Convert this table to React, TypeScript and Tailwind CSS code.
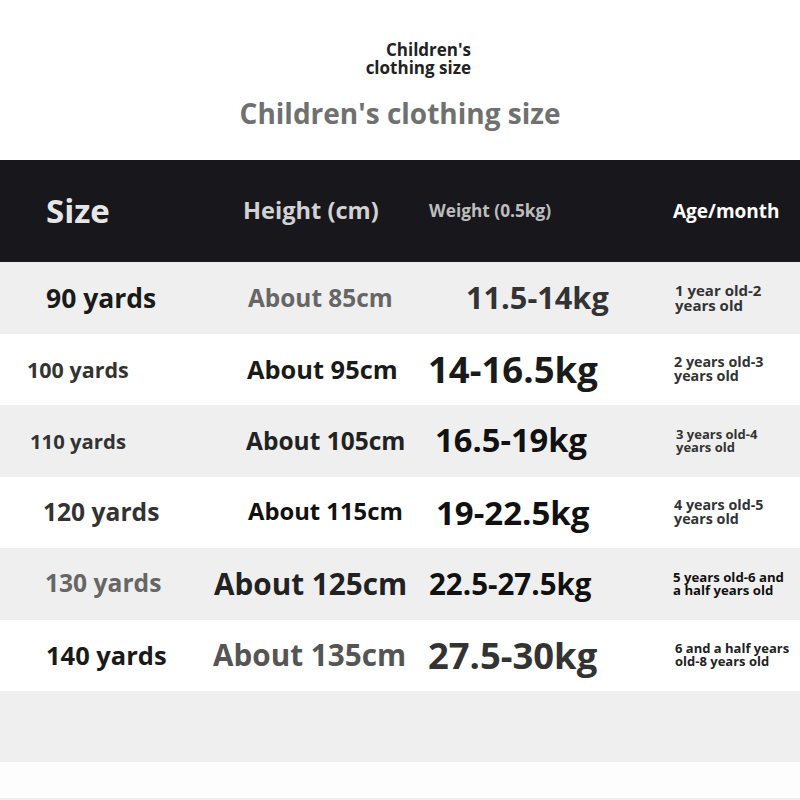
import React from "react";

type Cell = { text: string[]; pl: string; cls: string };
type Row = { bg: string; cells: Cell[] };

const rows: Row[] = [
  {
    bg: "bg-[#efefef]",
    cells: [
      { text: ["90 yards"], pl: "pl-[46px]", cls: "text-[26.5px] text-[#1a1a1a]" },
      { text: ["About 85cm"], pl: "pl-[48px]", cls: "text-[24.4px] text-[#666666]" },
      { text: ["11.5-14kg"], pl: "pl-[46px]", cls: "text-[30.7px] text-[#333333]" },
      { text: ["1 year old-2", "years old"], pl: "pl-[10px]", cls: "text-[15px] text-[#333333]" },
    ],
  },
  {
    bg: "bg-white",
    cells: [
      { text: ["100 yards"], pl: "pl-[27px]", cls: "text-[21.5px] text-[#333333]" },
      { text: ["About 95cm"], pl: "pl-[47px]", cls: "text-[25.4px] text-[#1a1a1a]" },
      { text: ["14-16.5kg"], pl: "pl-[8px]", cls: "text-[36.5px] text-[#1a1a1a]" },
      { text: ["2 years old-3", "years old"], pl: "pl-[9px]", cls: "text-[14.3px] text-[#333333]" },
    ],
  },
  {
    bg: "bg-[#efefef]",
    cells: [
      { text: ["110 yards"], pl: "pl-[30px]", cls: "text-[20.3px] text-[#333333]" },
      { text: ["About 105cm"], pl: "pl-[46px]", cls: "text-[24.5px] text-[#222222]" },
      { text: ["16.5-19kg"], pl: "pl-[15px]", cls: "text-[32.7px] text-[#111111]" },
      { text: ["3 years old-4", "years old"], pl: "pl-[11px]", cls: "text-[13px] text-[#333333]" },
    ],
  },
  {
    bg: "bg-white",
    cells: [
      { text: ["120 yards"], pl: "pl-[43px]", cls: "text-[24.6px] text-[#333333]" },
      { text: ["About 115cm"], pl: "pl-[48px]", cls: "text-[23.8px] text-[#111111]" },
      { text: ["19-22.5kg"], pl: "pl-[16px]", cls: "text-[33px] text-[#111111]" },
      { text: ["4 years old-5", "years old"], pl: "pl-[9px]", cls: "text-[14.3px] text-[#333333]" },
    ],
  },
  {
    bg: "bg-[#efefef]",
    cells: [
      { text: ["130 yards"], pl: "pl-[45px]", cls: "text-[24.6px] text-[#666666]" },
      { text: ["About 125cm"], pl: "pl-[14px]", cls: "text-[29.7px] text-[#222222]" },
      { text: ["22.5-27.5kg"], pl: "pl-[9px]", cls: "text-[29.5px] text-[#111111]" },
      { text: ["5 years old-6 and", "a half years old"], pl: "pl-[8px]", cls: "text-[13.2px] text-[#111111]" },
    ],
  },
  {
    bg: "bg-white",
    cells: [
      { text: ["140 yards"], pl: "pl-[46px]", cls: "text-[25.5px] text-[#1a1a1a]" },
      { text: ["About 135cm"], pl: "pl-[13px]", cls: "text-[29.7px] text-[#555555]" },
      { text: ["27.5-30kg"], pl: "pl-[8px]", cls: "text-[36.4px] text-[#333333]" },
      { text: ["6 and a half years", "old-8 years old"], pl: "pl-[10px]", cls: "text-[13px] text-[#222222]" },
    ],
  },
];

const colW = ["w-[200px]", "w-[220px]", "w-[245px]", "w-[135px]"];

export default function App() {
  return (
    <div
      className="w-[800px] h-[800px] bg-white flex flex-col overflow-hidden"
      style={{ fontFamily: '"Open Sans", "Noto Sans", sans-serif' }}
    >
      <div className="h-[160px] flex flex-col items-center">
        <div className="mt-[41px] w-[142px] flex justify-end">
          <div className="text-right text-[17px] font-bold leading-[18px] text-[#222222]">
            Children's
            <br />
            clothing size
          </div>
        </div>
        <div className="mt-[16px] text-[28px] font-bold text-[#707070] leading-[40px]">
          Children's clothing size
        </div>
      </div>
      <div className="h-[102px] bg-[#18171c] flex items-center">
        <div className={`${colW[0]} pl-[46px] text-[33px] font-bold text-[#e6e6e6]`}>Size</div>
        <div className={`${colW[1]} pl-[43px] text-[23.6px] font-bold text-[#d2d2d2]`}>Height (cm)</div>
        <div className={`${colW[2]} pl-[9px] text-[17.3px] font-bold text-[#bdbdbd]`}>Weight (0.5kg)</div>
        <div className={`${colW[3]} pl-[8px] text-[19px] font-bold text-white`}>Age/month</div>
      </div>
      {rows.map((r, i) => (
        <div key={i} className={`h-[71.5px] shrink-0 flex items-center ${r.bg}`}>
          {r.cells.map((c, j) => (
            <div key={j} className={`${colW[j]} ${c.pl} font-bold ${c.cls} leading-none whitespace-nowrap`}>
              {c.text.map((t, k) => (
                <div key={k}>{t}</div>
              ))}
            </div>
          ))}
        </div>
      ))}
      <div className="h-[71px] shrink-0 bg-[#efefef]" />
      <div className="flex-1 bg-[#fdfdfd] border-b-2 border-[#eeeeee]" />
    </div>
  );
}
